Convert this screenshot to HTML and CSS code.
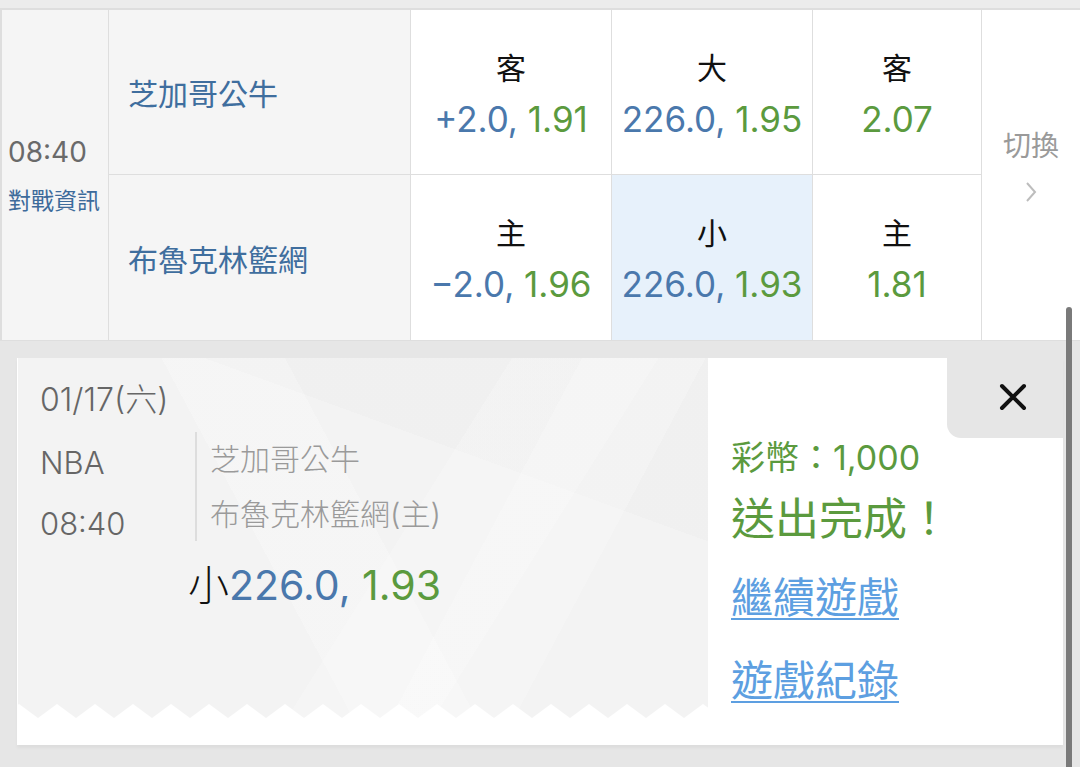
FILE: index.html
```html
<!DOCTYPE html>
<html lang="zh-Hant">
<head>
<meta charset="utf-8">
<title>NBA</title>
<link rel="stylesheet" href="styles.css">
</head>
<body>
<div class="screen">
  <div class="topbar"></div>
  <div class="board">
    <div class="cell time">
      <div class="time-clock">08:40</div>
      <div class="time-info">對戰資訊</div>
    </div>
    <div class="cell team">芝加哥公牛</div>
    <div class="cell odd">
      <div class="odd-label">客</div>
      <div class="odd-val"><span class="blue">+2.0,</span> <span class="green">1.91</span></div>
    </div>
    <div class="cell odd">
      <div class="odd-label">大</div>
      <div class="odd-val"><span class="blue">226.0,</span> <span class="green">1.95</span></div>
    </div>
    <div class="cell odd">
      <div class="odd-label">客</div>
      <div class="odd-val"><span class="green">2.07</span></div>
    </div>
    <div class="cell switch">
      <div class="switch-label">切換</div>
      <svg class="chevron" width="12" height="22" viewBox="0 0 12 22"><polyline points="2,2 10,11 2,20" fill="none" stroke="#bdbdbd" stroke-width="2"/></svg>
    </div>
    <div class="cell team">布魯克林籃網</div>
    <div class="cell odd">
      <div class="odd-label">主</div>
      <div class="odd-val"><span class="blue">−2.0,</span> <span class="green">1.96</span></div>
    </div>
    <div class="cell odd selected">
      <div class="odd-label">小</div>
      <div class="odd-val"><span class="blue">226.0,</span> <span class="green">1.93</span></div>
    </div>
    <div class="cell odd">
      <div class="odd-label">主</div>
      <div class="odd-val"><span class="green">1.81</span></div>
    </div>
  </div>

  <div class="panel">
    <div class="card">
      <div class="ticket">
        <div class="ticket-body">
          <div class="t-date">01/17(六)</div>
          <div class="t-info">
            <div class="t-meta">
              <div>NBA</div>
              <div>08:40</div>
            </div>
            <div class="t-divider"></div>
            <div class="t-teams">
              <div>芝加哥公牛</div>
              <div>布魯克林籃網(主)</div>
            </div>
          </div>
          <div class="t-pick"><span class="pick-side">小</span><span class="blue">226.0,</span> <span class="green">1.93</span></div>
        </div>
        <svg class="zigzag" width="690" height="14" viewBox="0 0 690 14">
          <defs>
            <pattern id="zz" x="20" y="0" width="38" height="14" patternUnits="userSpaceOnUse">
              <polygon points="0,14 19,0 38,14" fill="#ffffff"/>
            </pattern>
          </defs>
          <rect x="0" y="0" width="690" height="14" fill="url(#zz)"/>
        </svg>
      </div>
      <div class="result">
        <button class="close" type="button" aria-label="close">
          <svg width="30" height="30" viewBox="0 0 30 30"><path d="M4 4 L26 26 M26 4 L4 26" stroke="#111" stroke-width="4" stroke-linecap="round"/></svg>
        </button>
        <div class="r-coins">彩幣：1,000</div>
        <div class="r-done">送出完成！</div>
        <a class="r-link r-continue" href="#">繼續遊戲</a>
        <a class="r-link r-record" href="#">遊戲紀錄</a>
      </div>
    </div>
  </div>

  <div class="scrollbar"></div>
</div>
</body>
</html>
```

FILE: styles.css
```css
* { box-sizing: border-box; }

html, body {
  margin: 0;
  padding: 0;
  width: 1080px;
  height: 767px;
  overflow: hidden;
  background: #e6e6e6;
  font-family: "Inter", "Noto Sans CJK TC", sans-serif;
}

.screen {
  position: relative;
  width: 1080px;
  height: 767px;
  display: flex;
  flex-direction: column;
}

.topbar {
  height: 10px;
  background: #ececec;
  border-bottom: 2px solid #dedede;
}

.board {
  display: grid;
  grid-template-columns: 106px 301px 200px 200px 168px 1fr;
  grid-template-rows: 164px 165px;
  gap: 1px;
  padding-left: 2px;
  background: #dedede;
  border-bottom: 1px solid #dedede;
}

.cell {
  background: #ffffff;
}

.time {
  grid-column: 1;
  grid-row: 1 / 3;
  background: #f5f5f5;
  display: flex;
  flex-direction: column;
  justify-content: center;
  padding-left: 6px;
}

.time-clock {
  font-size: 28px;
  line-height: 36px;
  color: #6a6a6a;
}

.time-info {
  font-size: 23px;
  line-height: 30px;
  margin-top: 16px;
  color: #3d6b9b;
}

.team {
  grid-column: 2;
  background: #f5f5f5;
  display: flex;
  align-items: center;
  padding-left: 19px;
  font-size: 30px;
  color: #3f6e9e;
}

.odd {
  display: flex;
  flex-direction: column;
  align-items: center;
  justify-content: center;
  padding-top: 5px;
}

.odd.selected {
  background: #e7f1fb;
}

.odd-label {
  font-size: 30px;
  line-height: 44px;
  color: #111;
}

.odd-val {
  margin-top: 4px;
  font-size: 35px;
  line-height: 50px;
  white-space: nowrap;
}

.blue { color: #4a78ac; }
.green { color: #5b9a3e; }

.switch {
  grid-column: 6;
  grid-row: 1 / 3;
  display: flex;
  flex-direction: column;
  align-items: center;
  justify-content: center;
  padding-bottom: 22px;
}

.switch-label {
  font-size: 28px;
  line-height: 40px;
  color: #9a9a9a;
}

.chevron {
  margin-top: 15px;
}

.panel {
  flex: 1;
  padding: 17px 17px 22px 17px;
  background: #e6e6e6;
}

.card {
  height: 387px;
  background: #ffffff;
  display: flex;
  align-items: flex-start;
  box-shadow: 0 3px 3px rgba(0, 0, 0, 0.04);
}

.ticket {
  width: 690px;
  margin-left: 1px;
  height: 360px;
  display: flex;
  flex-direction: column;
  border-radius: 0 0 12px 0;
  background:
    linear-gradient(62deg, transparent 38%, rgba(255,255,255,0.22) 38%, rgba(255,255,255,0.22) 52%, transparent 52%),
    linear-gradient(-58deg, transparent 30%, rgba(255,255,255,0.18) 30%, rgba(255,255,255,0.18) 46%, transparent 46%),
    linear-gradient(118deg, transparent 64%, rgba(255,255,255,0.2) 64%, rgba(255,255,255,0.2) 78%, transparent 78%),
    linear-gradient(20deg, transparent 70%, rgba(0,0,0,0.01) 70%),
    #f3f3f3;
}

.ticket-body {
  flex: 1;
  padding: 22px 22px 0 22px;
  font-weight: 300;
}

.t-date {
  font-size: 32px;
  line-height: 40px;
  color: #666;
}

.t-info {
  display: flex;
  align-items: flex-start;
  margin-top: 12px;
}

.t-meta {
  width: 155px;
  font-size: 31px;
  line-height: 61px;
  color: #666;
}

.t-divider {
  width: 2px;
  height: 109px;
  background: #dddddd;
}

.t-teams {
  padding-left: 13px;
  font-size: 30px;
  line-height: 55px;
  color: #9a9a9a;
}

.t-pick {
  margin-top: 6px;
  margin-left: 148px;
  font-size: 41px;
  line-height: 50px;
  font-weight: 400;
  white-space: nowrap;
}

.pick-side {
  color: #111;
  font-weight: 300;
}

.zigzag {
  display: block;
  flex: none;
}

.result {
  flex: 1;
  display: flex;
  flex-direction: column;
  align-items: flex-start;
  padding-left: 23px;
}

.close {
  align-self: flex-end;
  width: 116px;
  height: 80px;
  border: 0;
  padding: 0 0 2px 16px;
  margin: 0;
  background: #e6e6e6;
  border-bottom-left-radius: 14px;
  display: flex;
  align-items: center;
  justify-content: center;
}

.r-coins {
  font-size: 34px;
  line-height: 40px;
  color: #5b9a3e;
}

.r-done {
  margin-top: 10px;
  font-size: 44px;
  line-height: 62px;
  color: #5b9a3e;
}

.r-link {
  font-size: 42px;
  line-height: 60px;
  color: #5d9fe1;
  text-decoration: underline;
  text-decoration-thickness: 2px;
  text-underline-offset: 5px;
}

.r-continue { margin-top: 18px; }
.r-record { margin-top: 23px; }

.scrollbar {
  position: absolute;
  left: 1066px;
  top: 307px;
  width: 6px;
  height: 460px;
  border-radius: 3px 3px 0 0;
  background: #7a7a7a;
}
```
